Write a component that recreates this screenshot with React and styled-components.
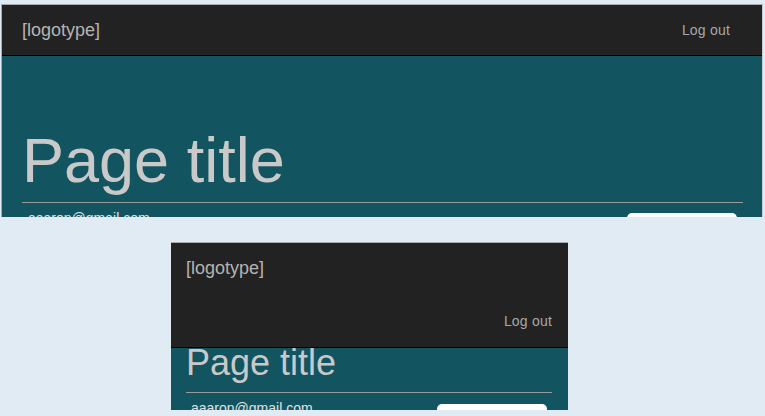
import React from 'react';
import styled, { createGlobalStyle, css } from 'styled-components';

const GlobalStyle = createGlobalStyle`
  html, body {
    margin: 0;
    padding: 0;
    background: #e0ebf4;
    font-family: "Liberation Sans", Arial, sans-serif;
  }
`;

const Stage = styled.div`
  display: flex;
  flex-direction: column;
  align-items: flex-start;
  height: 416px;
  overflow: hidden;
`;

const Frame = styled.div`
  box-sizing: border-box;
  overflow: hidden;
  border-top: 1px solid #a9acaf;
  ${(props) => props.compact
    ? css` width: 397px; height: 168px; margin: 25px 0 0 171px; `
    : css` width: 762px; height: 213px; margin: 4px 0 0 1px; border-left: 1px solid #a9acaf; border-right: 1px solid #c6ccd2; `}
`;

const Header = styled.header`
  display: flex;
  background: #222;
  border-bottom: 1px solid #000;
  ${(props) => props.compact
    ? css` flex-direction: column; gap: 33px; padding: 15px 16px 16px 15px; `
    : css` align-items: center; justify-content: space-between; height: 50px; padding: 0 32px 0 20px; `}
`;

const Logo = styled.div`
  font-size: 18px;
  line-height: 20px;
  color: #b4b4b4;
`;

const NavLink = styled.a`
  align-self: flex-end;
  font-size: 14px;
  line-height: 20px;
  color: #a8a8a8;
  text-decoration: none;
  letter-spacing: 0.2px;
  ${(props) => !props.compact && css` align-self: center; `}
`;

const Hero = styled.section`
  background: #125561;
  ${(props) => props.compact
    ? css` padding: 0 16px 20px 15px; `
    : css` padding: 69px 19px 20px 20px; `}
`;

const Title = styled.h1`
  margin: 0;
  font-weight: normal;
  color: #c9c9c9;
  ${(props) => props.compact
    ? css` font-size: 36px; line-height: 30px; margin-bottom: 14px; `
    : css` font-size: 63px; line-height: 70px; margin-bottom: 7px; `}
`;

const Rule = styled.hr`
  margin: 0;
  border: 0;
  border-top: 1px solid #9a9a9a;
`;

const UserRow = styled.div`
  display: flex;
  justify-content: space-between;
  align-items: flex-start;
  ${(props) => props.compact
    ? css` padding: 0 5px; `
    : css` padding: 0 6px; `}
`;

const Email = styled.span`
  font-size: 14px;
  line-height: 20px;
  margin-top: 5px;
  color: #e2e2e2;
`;

const Button = styled.button`
  width: 110px;
  height: 30px;
  border: 0;
  border-radius: 5px;
  background: #fff;
  ${(props) => props.compact
    ? css` margin-top: 11px; `
    : css` margin-top: 10px; `}
`;

function Screen({ compact }) {
  return (
    <Frame compact={compact}>
      <Header compact={compact}>
        <Logo>[logotype]</Logo>
        <NavLink compact={compact} href="#">Log out</NavLink>
      </Header>
      <Hero compact={compact}>
        <Title compact={compact}>Page title</Title>
        <Rule />
        <UserRow compact={compact}>
          <Email>aaaron@gmail.com</Email>
          <Button compact={compact} />
        </UserRow>
      </Hero>
    </Frame>
  );
}

export default function App() {
  return (
    <>
      <GlobalStyle />
      <Stage>
        <Screen />
        <Screen compact />
      </Stage>
    </>
  );
}
